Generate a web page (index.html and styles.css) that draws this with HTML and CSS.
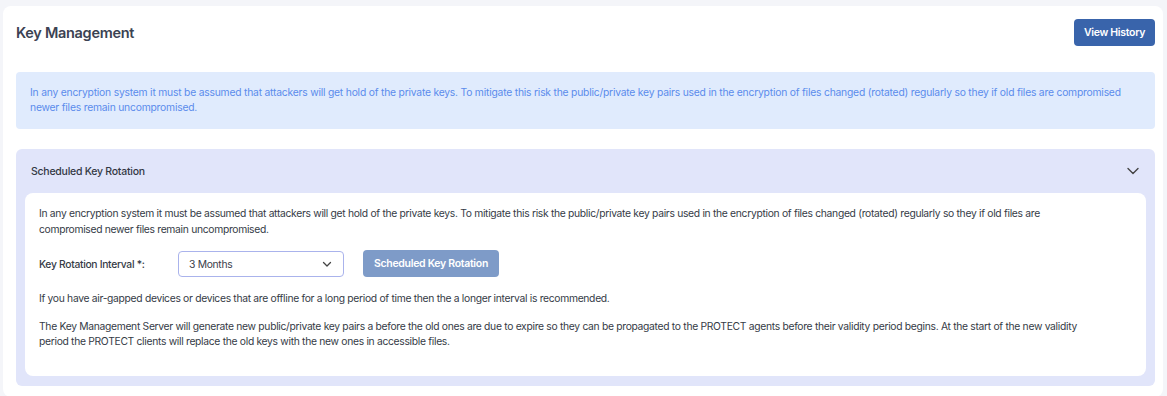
FILE: index.html
```html
<!DOCTYPE html>
<html lang="en">
<head>
    <meta charset="UTF-8">
    <meta name="viewport" content="width=device-width, initial-scale=1.0">
    <title>Key Management</title>
    <link rel="stylesheet" href="styles.css">
</head>
<body>
    <div class="page">
        <div class="card">
            <div class="card-header">
                <h1 class="page-title">Key Management</h1>
                <button class="btn btn-primary">View History</button>
            </div>

            <div class="info-box">
                In any encryption system it must be assumed that attackers will get hold of the private keys. To mitigate this risk the public/private key pairs used in the encryption of files changed (rotated) regularly so they if old files are compromised newer files remain uncompromised.
            </div>

            <section class="accordion">
                <div class="accordion-header">
                    <span class="accordion-title">Scheduled Key Rotation</span>
                    <svg class="chevron" width="14" height="14" viewBox="0 0 14 14">
                        <path d="M2 4.5 L7 9.5 L12 4.5" fill="none" stroke="#444" stroke-width="1.4" stroke-linecap="round" stroke-linejoin="round"/>
                    </svg>
                </div>
                <div class="accordion-body">
                    <p class="first">In any encryption system it must be assumed that attackers will get hold of the private keys. To mitigate this risk the public/private key pairs used in the encryption of files changed (rotated) regularly so they if old files are compromised newer files remain uncompromised.</p>

                    <div class="form-row">
                        <label class="form-label" for="interval">Key Rotation Interval *:</label>
                        <div class="select">
                            <span id="interval">3 Months</span>
                            <svg width="12" height="12" viewBox="0 0 12 12">
                                <path d="M2.5 4.5 L6 8 L9.5 4.5" fill="none" stroke="#444" stroke-width="1.3" stroke-linecap="round" stroke-linejoin="round"/>
                            </svg>
                        </div>
                        <button class="btn btn-disabled">Scheduled Key Rotation</button>
                    </div>

                    <p>If you have air-gapped devices or devices that are offline for a long period of time then the a longer interval is recommended.</p>

                    <p class="last">The Key Management Server will generate new public/private key pairs a before the old ones are due to expire so they can be propagated to the PROTECT agents before their validity period begins. At the start of the new validity<br>period the PROTECT clients will replace the old keys with the new ones in accessible files.</p>
                </div>
            </section>
        </div>
    </div>
</body>
</html>
```

FILE: styles.css
```css
/* Global */
body {
    margin: 0;
    font-family: Inter, "Noto Sans", sans-serif;
    background-color: #f4f5f9;
    color: #353b46;
}

.page {
    padding: 6px 4px 0 3px;
}

.card {
    background-color: #ffffff;
    border-radius: 8px;
    padding: 13px 8px 11px 13px;
}

/* Header */
.card-header {
    display: flex;
    justify-content: space-between;
    align-items: center;
    height: 27px;
}

.page-title {
    margin: 0;
    font-size: 14.5px;
    font-weight: 600;
    color: #3b4252;
    letter-spacing: -0.3px;
}

.btn {
    border: none;
    border-radius: 4px;
    font-family: inherit;
    font-size: 10.5px;
    font-weight: 600;
    color: #ffffff;
    letter-spacing: -0.3px;
    cursor: pointer;
}

.btn-primary {
    background-color: #3964ab;
    width: 81px;
    height: 27px;
    padding: 0;
}

.btn-disabled {
    background-color: #7e9bc8;
    width: 136px;
    height: 27px;
    padding: 0;
    margin-left: 19px;
}

/* Info box */
.info-box {
    margin-top: 26px;
    background-color: #e0ebfd;
    border-radius: 4px;
    padding: 13px 30px 14px 14px;
    font-size: 10.3px;
    line-height: 15px;
    color: #5b8cec;
    letter-spacing: -0.2px;
}

/* Accordion */
.accordion {
    margin-top: 20px;
    background-color: #e1e5fa;
    border-radius: 6px;
    padding: 0 9px 10px 9px;
}

.accordion-header {
    display: flex;
    justify-content: space-between;
    align-items: center;
    height: 44px;
    padding: 0 6px 0 6px;
}

.accordion-title {
    font-size: 10.5px;
    font-weight: 500;
    color: #333844;
    letter-spacing: -0.25px;
}

.chevron {
    display: block;
}

.accordion-body {
    background-color: #ffffff;
    border-radius: 8px;
    padding: 12px 30px 27px 14px;
    font-size: 10.3px;
    line-height: 16px;
    color: #353b46;
    letter-spacing: -0.3px;
}

.accordion-body p {
    margin: 0 0 13px 0;
}

.accordion-body p.first {
    max-width: 1060px;
}

.accordion-body p.last {
    margin: 11px 0 0 0;
    line-height: 15px;
}

/* Form row */
.form-row {
    display: flex;
    align-items: center;
    margin-bottom: 13px;
}

.form-label {
    width: 139px;
    font-weight: 500;
}

.select {
    display: flex;
    justify-content: space-between;
    align-items: center;
    box-sizing: border-box;
    width: 166px;
    height: 26px;
    border: 1px solid #aab3ec;
    border-radius: 4px;
    padding: 0 10px 0 10px;
    color: #3a404b;
}

.select svg {
    display: block;
}
```
